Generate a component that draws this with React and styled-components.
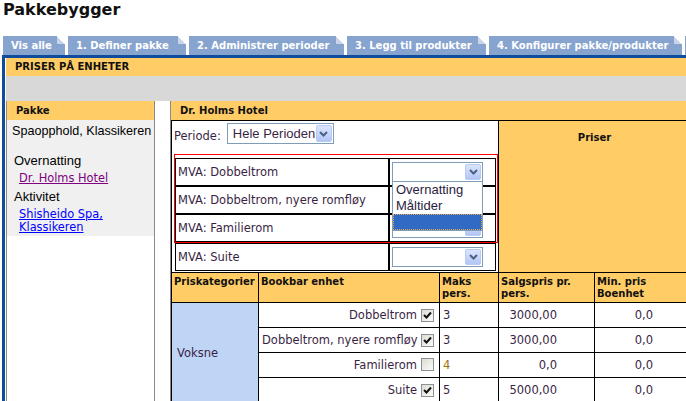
import React from "react";
import styled, { createGlobalStyle } from "styled-components";

const GlobalStyle = createGlobalStyle`
  html, body {
    margin: 0;
    padding: 0;
    background: #fff;
    overflow: hidden;
  }
  body {
    font-family: "DejaVu Sans", Verdana, sans-serif;
    font-size: 11px;
    color: #222;
  }
`;

const mvaRows = [
  { label: "MVA: Dobbeltrom", open: true },
  { label: "MVA: Dobbeltrom, nyere romfløy" },
  { label: "MVA: Familierom" },
];

const units = [
  { name: "Dobbeltrom", checked: true, max: 3, price: "3000,00", min: "0,0" },
  { name: "Dobbeltrom, nyere romfløy", checked: true, max: 3, price: "3000,00", min: "0,0" },
  { name: "Familierom", checked: false, max: 4, price: "0,0", min: "0,0" },
  { name: "Suite", checked: true, max: 5, price: "5000,00", min: "0,0" },
];

// the last tab only peeks in at the right edge
const tabs = [
  { label: "Vis alle", w: 62 },
  { label: "1. Definer pakke", w: 118 },
  { label: "2. Administrer perioder", w: 155 },
  { label: "3. Legg til produkter", w: 139 },
  { label: "4. Konfigurer pakke/produkter", w: 193 },
  { label: "", w: 120 },
];

function Chevron() {
  return (
    <svg width="9" height="6" viewBox="0 0 9 6">
      <path d="M1 1 L4.5 4.5 L8 1" fill="none" stroke="#4d6185" strokeWidth="2" />
    </svg>
  );
}

function FakeSelect({ w, h, value, children }) {
  return (
    <SelectBox $w={w} $h={h}>
      <SelectValue>{value}</SelectValue>
      <ArrowButton>
        <Chevron />
      </ArrowButton>
      {children}
    </SelectBox>
  );
}

function CheckBox({ checked }) {
  return (
    <Box>
      {checked && (
        <svg width="11" height="11" viewBox="0 0 11 11">
          <path d="M2 5 L4.5 7.5 L9 2.5" fill="none" stroke="#111" strokeWidth="2" />
        </svg>
      )}
    </Box>
  );
}

export default function App() {
  return (
    <Page>
      <GlobalStyle />
      <Title>Pakkebygger</Title>
      <Tabs>
        {tabs.map((t, i) => (
          <Tab key={i} $w={t.w}>
            {t.label}
          </Tab>
        ))}
      </Tabs>
      <Frame>
        <SectionBar>PRISER PÅ ENHETER</SectionBar>
        <GreyBand />
        <Columns>
          <SidePanel>
            <PanelHead>Pakke</PanelHead>
            <SideBody>
              <PackageName>Spaopphold, Klassikeren</PackageName>
              <Category $first>Overnatting</Category>
              <SideLink $visited>Dr. Holms Hotel</SideLink>
              <Category>Aktivitet</Category>
              <SideLink>Shisheido Spa, Klassikeren</SideLink>
            </SideBody>
          </SidePanel>
          <MainPanel>
            <PanelHead>Dr. Holms Hotel</PanelHead>
            <PriceTable>
              <colgroup>
                <col style={{ width: 87 }} />
                <col style={{ width: 181 }} />
                <col style={{ width: 59 }} />
                <col style={{ width: 96 }} />
                <col style={{ width: 96 }} />
              </colgroup>
              <tbody>
                <tr>
                  <SetupCell colSpan={3}>
                    <PeriodRow>
                      <PeriodLabel>Periode:</PeriodLabel>
                      <FakeSelect w={107} h={21} value="Hele Perioden" />
                    </PeriodRow>
                    <RedBox>
                      <MvaList>
                        {mvaRows.map((r) => (
                          <MvaRow key={r.label}>
                            <MvaLabel>{r.label}</MvaLabel>
                            <MvaSelectCell>
                              <FakeSelect w={91} h={20}>
                                {r.open && (
                                  <DropList>
                                    <DropItem>Overnatting</DropItem>
                                    <DropItem>Måltider</DropItem>
                                    <DropItem $active />
                                  </DropList>
                                )}
                              </FakeSelect>
                            </MvaSelectCell>
                          </MvaRow>
                        ))}
                      </MvaList>
                    </RedBox>
                    <SuiteList>
                      <MvaRow>
                        <MvaLabel>MVA: Suite</MvaLabel>
                        <MvaSelectCell>
                          <FakeSelect w={91} h={20} />
                        </MvaSelectCell>
                      </MvaRow>
                    </SuiteList>
                  </SetupCell>
                  <PriceHeadCell colSpan={2}>Priser</PriceHeadCell>
                </tr>
                <tr>
                  <HeadCell>Priskategorier</HeadCell>
                  <HeadCell>Bookbar enhet</HeadCell>
                  <HeadCell>Maks pers.</HeadCell>
                  <HeadCell>Salgspris pr. pers.</HeadCell>
                  <HeadCell>Min. pris Boenhet</HeadCell>
                </tr>
                {units.map((u, i) => (
                  <tr key={u.name}>
                    {i === 0 && <CategoryCell rowSpan={units.length}>Voksne</CategoryCell>}
                    <UnitCell>
                      {u.name}
                      <CheckBox checked={u.checked} />
                    </UnitCell>
                    <BodyCell $muted={!u.checked}>{u.max}</BodyCell>
                    <BodyCell>
                      <Amount>{u.price}</Amount>
                    </BodyCell>
                    <BodyCell>
                      <Amount>{u.min}</Amount>
                    </BodyCell>
                  </tr>
                ))}
              </tbody>
            </PriceTable>
          </MainPanel>
        </Columns>
      </Frame>
    </Page>
  );
}

const Page = styled.div`
  width: 686px;
  height: 401px;
  overflow: hidden;
`;

const Title = styled.h1`
  margin: 0 0 16px 3px;
  font-size: 16px;
  line-height: 20px;
  font-weight: bold;
  color: #111;
`;

const Tabs = styled.div`
  display: flex;
  gap: 3px;
  margin-left: 3px;
  height: 19px;
`;

const Tab = styled.div`
  position: relative;
  flex: none;
  box-sizing: border-box;
  width: ${(p) => p.$w}px;
  height: 19px;
  padding-left: 8px;
  background: #87a4cf;
  color: #fff;
  font-size: 10px;
  font-weight: bold;
  line-height: 19px;
  white-space: nowrap;
  overflow: hidden;
  &::after {
    content: "";
    position: absolute;
    top: 0;
    right: 0;
    width: 8px;
    height: 8px;
    background: linear-gradient(to bottom left, #fff 50%, #c8d4e8 50%);
  }
`;

const Frame = styled.div`
  margin-left: 2px;
  padding-left: 1px;
  border-top: 3px solid #0f4c9e;
  border-left: 3px solid #0f4c9e;
`;

const SectionBar = styled.div`
  height: 18px;
  padding-left: 9px;
  background: #ffcc66;
  color: #111;
  font-size: 10px;
  font-weight: bold;
  line-height: 18px;
`;

const GreyBand = styled.div`
  height: 25px;
  background: #d8d8d8;
`;

const Columns = styled.div`
  display: flex;
  gap: 15px;
  height: 310px;
`;

const SidePanel = styled.div`
  flex: none;
  width: 147px;
  border-left: 1px solid #8a8a8a;
  border-right: 1px solid #8a8a8a;
`;

const PanelHead = styled.div`
  height: 19px;
  padding-left: 9px;
  background: #ffcc66;
  color: #111;
  font-size: 10px;
  font-weight: bold;
  line-height: 19px;
`;

const SideBody = styled.div`
  display: flex;
  flex-direction: column;
  padding: 4px 0 2px;
  background: #f0f0f0;
`;

const PackageName = styled.div`
  padding-left: 5px;
  font-family: "Liberation Sans", Tahoma, sans-serif;
  font-size: 12.6px;
  line-height: 15px;
  color: #000;
  white-space: nowrap;
`;

const Category = styled.div`
  margin-top: ${(p) => (p.$first ? 14 : 4)}px;
  padding-left: 7px;
  font-family: "Liberation Sans", Tahoma, sans-serif;
  font-size: 13px;
  line-height: 15px;
  color: #000;
`;

const SideLink = styled.a`
  margin-top: 4px;
  padding: 0 8px 0 12px;
  font-size: 11.4px;
  line-height: 13px;
  color: ${(p) => (p.$visited ? "#800080" : "#0000ff")};
  text-decoration: underline;
  cursor: pointer;
`;

const MainPanel = styled.div`
  flex: none;
  width: 540px;
  border-left: 1px solid #8a8a8a;
`;

const PriceTable = styled.table`
  border-collapse: collapse;
  table-layout: fixed;
  width: 520px;
  font-size: 11.5px;
  color: #3a1f45;
`;

const SetupCell = styled.td`
  border: 1px solid #000;
  padding: 2px 0 1px 2px;
  vertical-align: top;
  background: #fff;
`;

const PeriodRow = styled.div`
  display: flex;
  align-items: flex-end;
  gap: 6px;
`;

const PeriodLabel = styled.span`
  line-height: 13px;
  padding-bottom: 1px;
`;

const RedBox = styled.div`
  margin-top: 10px;
  padding: 3px 1px 0 0;
  border: 1px solid #ff0000;
`;

const MvaList = styled.div`
  border: 1px solid #000;
  & > * + * {
    border-top: 2px solid #000;
  }
`;

const SuiteList = styled(MvaList)`
  margin: 0 2px 0 1px;
`;

const MvaRow = styled.div`
  display: flex;
  height: 26px;
`;

const MvaLabel = styled.div`
  flex: none;
  width: 210px;
  padding-left: 2px;
  border-right: 2px solid #000;
  display: flex;
  align-items: center;
  white-space: nowrap;
`;

const MvaSelectCell = styled.div`
  flex: 1;
  display: flex;
  align-items: center;
  padding-left: 2px;
`;

const SelectBox = styled.div`
  position: relative;
  flex: none;
  box-sizing: border-box;
  display: flex;
  align-items: center;
  width: ${(p) => p.$w}px;
  height: ${(p) => p.$h}px;
  padding-left: 5px;
  border: 1px solid #7f9db9;
  background: #fff;
  font-family: "Liberation Sans", Tahoma, sans-serif;
  font-size: 13px;
`;

const SelectValue = styled.span`
  flex: 1;
  white-space: nowrap;
`;

const ArrowButton = styled.span`
  flex: none;
  box-sizing: border-box;
  display: flex;
  align-items: center;
  justify-content: center;
  width: 16px;
  height: calc(100% - 2px);
  margin-right: 1px;
  border: 1px solid #b7caf3;
  border-radius: 2px;
  background: linear-gradient(#dbe5fc, #b3c7f5);
`;

const DropList = styled.div`
  position: absolute;
  top: 100%;
  left: -1px;
  z-index: 2;
  box-sizing: border-box;
  width: 91px;
  border: 1px solid #7f9db9;
  background: #fff;
`;

const DropItem = styled.div`
  box-sizing: border-box;
  height: 16px;
  padding-left: 3px;
  line-height: 16px;
  color: #2a1a40;
  background: ${(p) => (p.$active ? "#316ac5" : "#fff")};
  outline: ${(p) => (p.$active ? "1px dotted #e8a848" : "none")};
  outline-offset: -1px;
`;

const PriceHeadCell = styled.td`
  border: 1px solid #000;
  padding-top: 11px;
  vertical-align: top;
  text-align: center;
  background: #ffcc66;
  color: #111;
  font-size: 10px;
  font-weight: bold;
`;

const HeadCell = styled.td`
  height: 22px;
  border: 1px solid #000;
  padding: 3px 2px 2px 2px;
  vertical-align: top;
  background: #ffcc66;
  color: #111;
  font-size: 10px;
  font-weight: bold;
  line-height: 12px;
  overflow: hidden;
`;

const CategoryCell = styled.td`
  border: 1px solid #000;
  padding-left: 5px;
  vertical-align: middle;
  background: #bed5f5;
`;

const BodyCell = styled.td`
  height: 24px;
  border: 1px solid #000;
  padding: 0 3px;
  vertical-align: middle;
  line-height: 13px;
  background: #fff;
  color: ${(p) => (p.$muted ? "#a0700c" : "inherit")};
`;

const UnitCell = styled(BodyCell)`
  padding-right: 5px;
  text-align: right;
  white-space: nowrap;
`;

const Box = styled.span`
  display: inline-flex;
  align-items: center;
  justify-content: center;
  box-sizing: border-box;
  width: 13px;
  height: 13px;
  margin-left: 4px;
  vertical-align: -2px;
  border: 1px solid #8e8f8f;
  background: linear-gradient(135deg, #dcdcd5, #fbfbf9);
`;

const Amount = styled.span`
  display: inline-block;
  width: 55px;
  text-align: right;
`;
